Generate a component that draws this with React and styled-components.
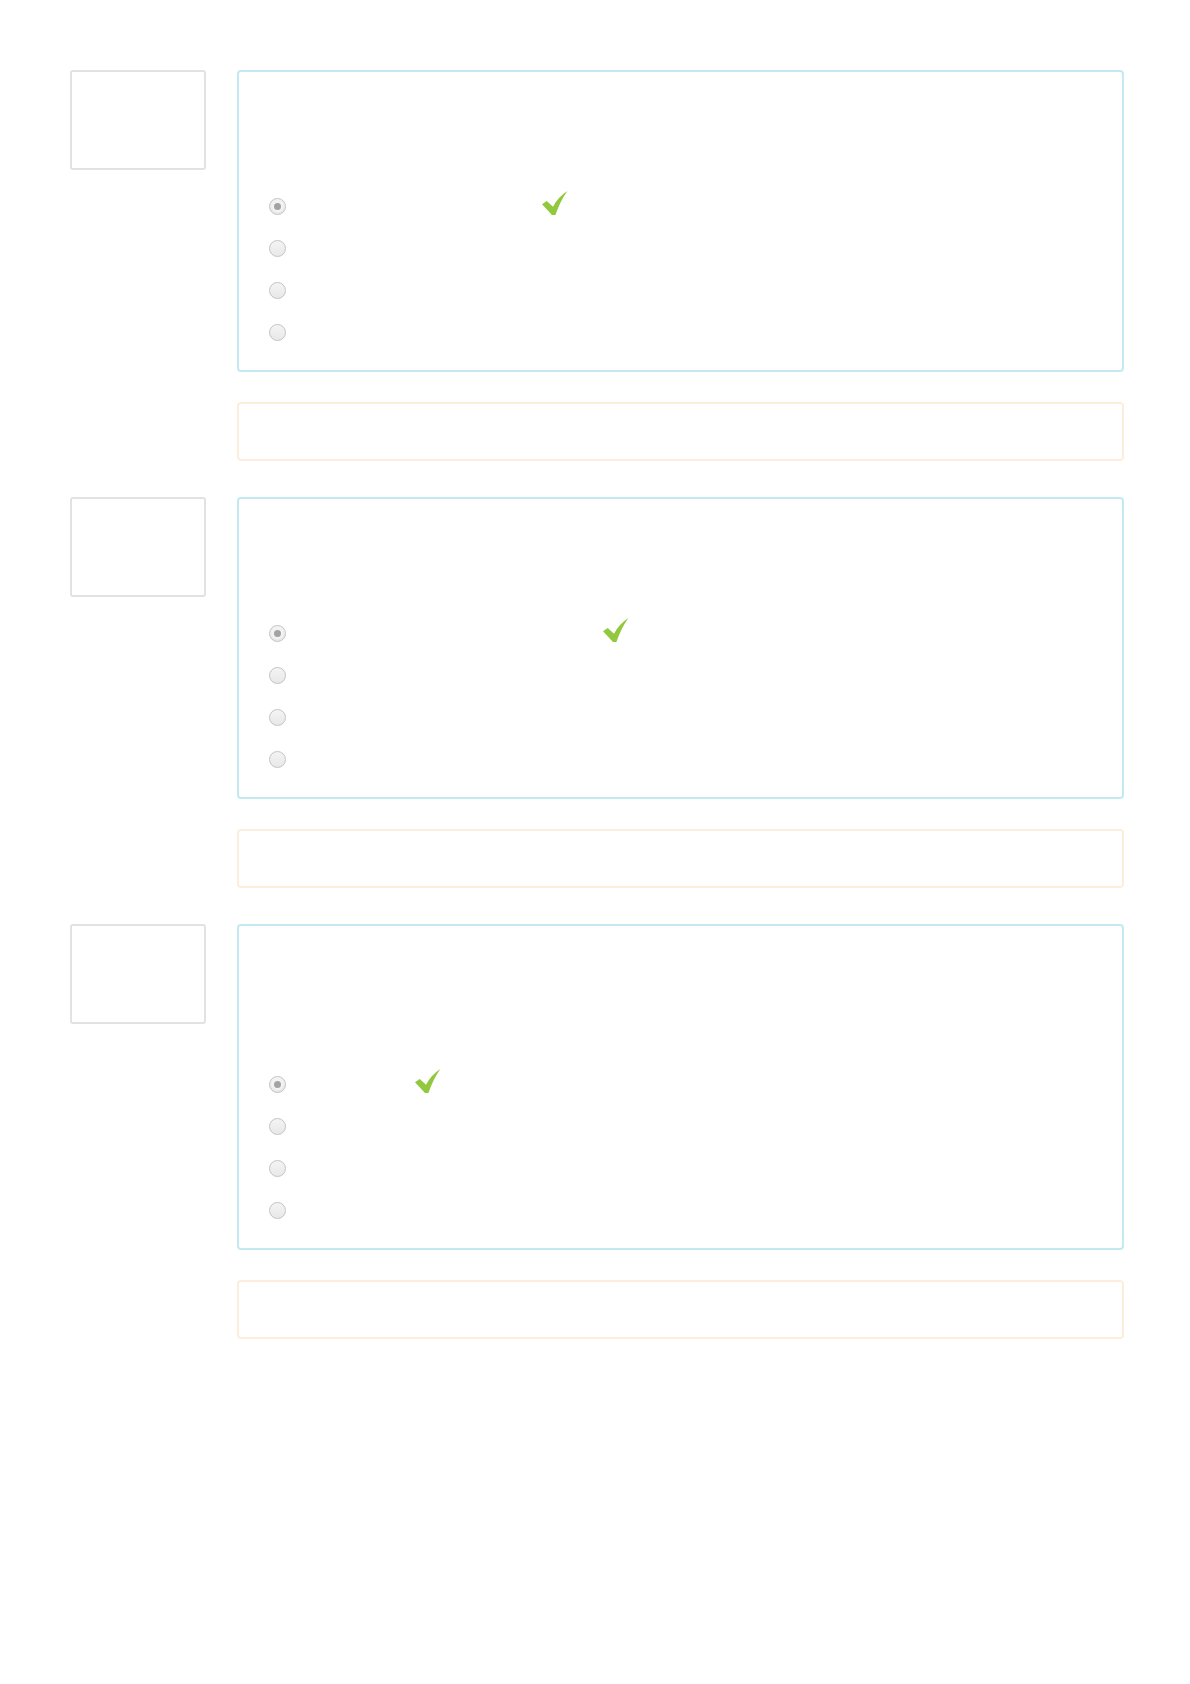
import React from "react"
import styled, { createGlobalStyle } from "styled-components"

const GlobalStyle = createGlobalStyle`
  html, body {
    margin: 0;
    padding: 0;
    background: #fff;
    font-family: "Liberation Sans", Arial, sans-serif;
    font-size: 14px;
    color: #333;
  }
`

const Page = styled.div`
  width: 1190px;
  min-height: 1684px;
  box-sizing: border-box;
  padding: 70px 66px 0 70px;
`

const Question = styled.div`
  display: flex;
  align-items: flex-start;
  gap: 31px;
  margin-bottom: 36px;
`

const Info = styled.div`
  width: 136px;
  height: 100px;
  flex: none;
  box-sizing: border-box;
  border: 2px solid #e2e2e2;
  border-radius: 3px;
  background: #fff;
`

const Content = styled.div`
  flex: 1;
  display: flex;
  flex-direction: column;
  gap: 30px;
`

const Formulation = styled.div`
  border: 2px solid #c4e9f3;
  border-radius: 4px;
  padding: 0 30px 17px 30px;
  background: #fff;
`

const QText = styled.div`
  height: ${p => 89 + p.$lines * 24}px;
`

const Answers = styled.div`
  display: flex;
  flex-direction: column;
`

const AnswerRow = styled.div`
  height: 42px;
  display: flex;
  align-items: center;
`

const Radio = styled.span`
  width: 17px;
  height: 17px;
  flex: none;
  box-sizing: border-box;
  border-radius: 50%;
  border: 1.5px solid #c3c3c3;
  background: linear-gradient(#f4f4f4, #e8e8e8);
  display: flex;
  align-items: center;
  justify-content: center;
  &::after {
    content: "";
    display: ${p => (p.$checked ? "block" : "none")};
    width: 7px;
    height: 7px;
    border-radius: 50%;
    background: #a3a3a3;
    box-shadow: 0 0 0 2px #f3f3f3;
  }
`

const Label = styled.span`
  display: inline-block;
  width: ${p => p.$width}px;
  margin-left: 8px;
  height: 18px;
`

const Tick = styled.svg`
  width: 26px;
  height: 24px;
  margin-left: 6px;
  margin-bottom: 6px;
  flex: none;
`

const Outcome = styled.div`
  height: 59px;
  box-sizing: border-box;
  border: 2px solid #fdeedb;
  border-radius: 4px;
  background: #fff;
`

const CheckMark = () => (
  <Tick viewBox="0 0 26 24">
    <path
      d="M0 13.3 L4.7 10 L11 15.7 Q16 6 25.4 0 Q18.5 9.5 13.4 24 L10 24 Z"
      fill="#92c83d"
    />
  </Tick>
)

const questions = [
  { lines: 1, labelWidth: 242 },
  { lines: 1, labelWidth: 303 },
  { lines: 2, labelWidth: 115 },
]

const App = () => (
  <Page>
    <GlobalStyle />
    {questions.map((q, i) => (
      <Question key={i}>
        <Info />
        <Content>
          <Formulation>
            <QText $lines={q.lines} />
            <Answers>
              {[0, 1, 2, 3].map(a => (
                <AnswerRow key={a}>
                  <Radio $checked={a === 0} />
                  {a === 0 && (
                    <>
                      <Label $width={q.labelWidth} />
                      <CheckMark />
                    </>
                  )}
                </AnswerRow>
              ))}
            </Answers>
          </Formulation>
          <Outcome />
        </Content>
      </Question>
    ))}
  </Page>
)

export default App
